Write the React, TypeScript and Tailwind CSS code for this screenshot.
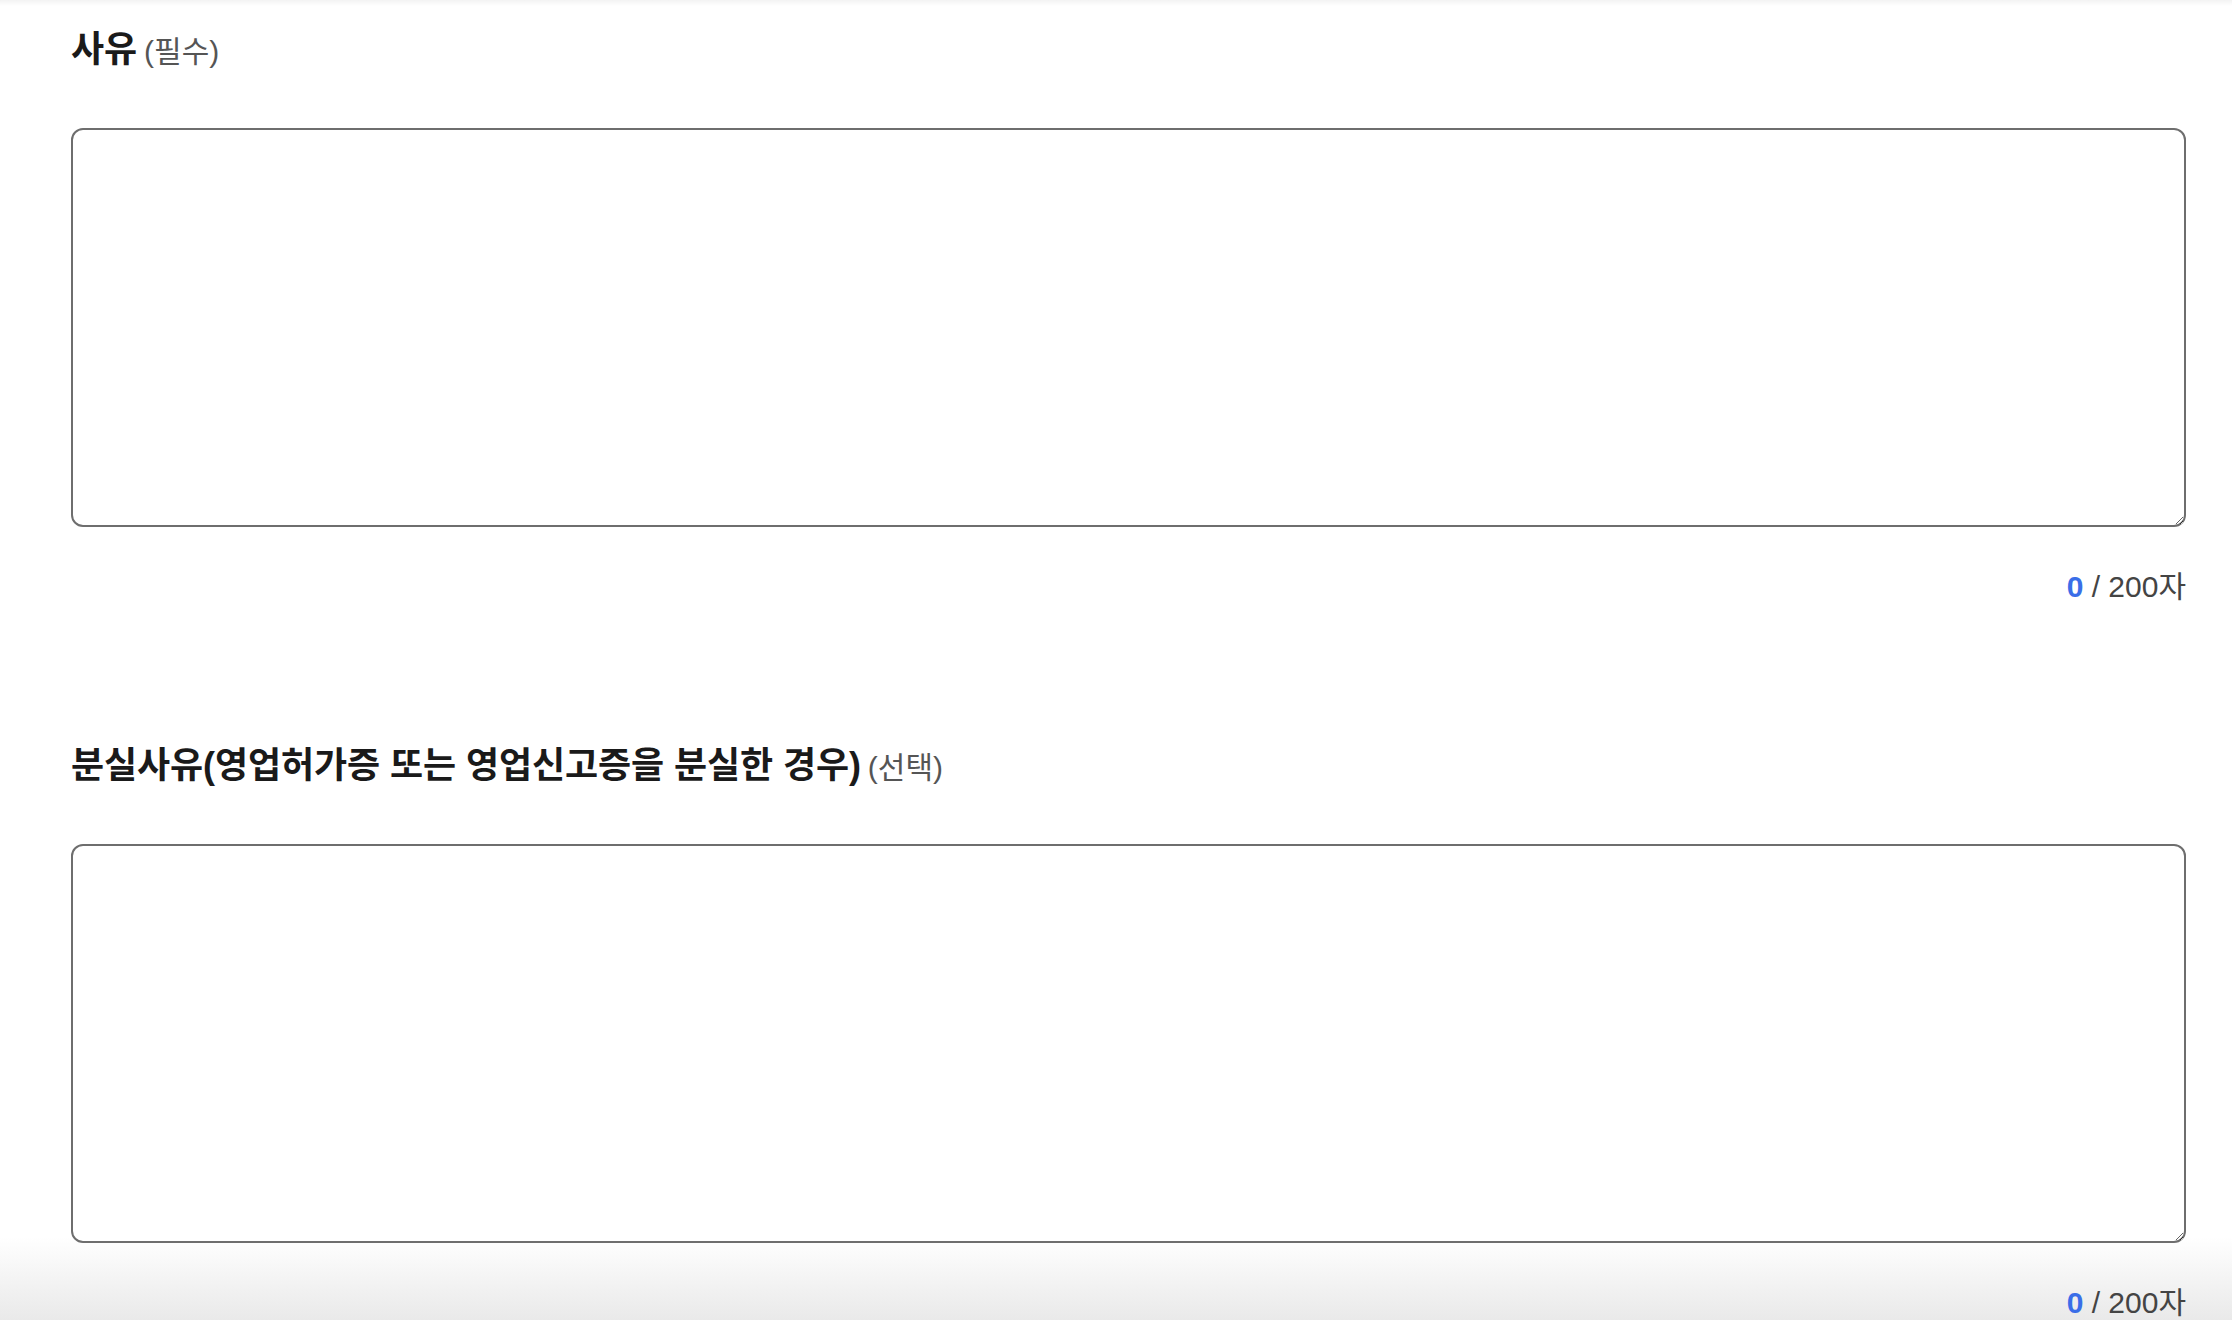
import { useState } from 'react';

const MAX = 200;

function ReasonField({ title, tag }: { title: string; tag: string }) {
  const [value, setValue] = useState('');

  return (
    <div>
      <label className="flex items-baseline gap-[7px] text-[36px] leading-[40px]">
        <span className="font-bold text-[#1a1a1a] tracking-[-0.1px]">{title}</span>
        <span className="text-[30px] text-[#555555]">({tag})</span>
      </label>
      <textarea
        value={value}
        maxLength={MAX}
        onChange={(e) => setValue(e.target.value)}
        className="mt-[56px] block h-[399px] w-full resize border-2 border-[#6e6e6e] rounded-[12px] bg-white p-4 text-[28px] outline-none"
      />
      <p className="mt-[42px] text-right text-[30px] leading-[36px] text-[#444444]">
        <span className="font-bold text-[#3a6ee8]">{value.length}</span> / {MAX}자
      </p>
    </div>
  );
}

export default function App() {
  return (
    <div
      className="relative min-h-[1320px] overflow-hidden bg-white"
      style={{ fontFamily: '"Liberation Sans", "Noto Sans CJK KR", sans-serif' }}
    >
      {/* header shadow */}
      <div className="pointer-events-none absolute left-0 right-0 top-0 h-[6px] bg-gradient-to-b from-[#f3f3f3] to-white" />

      {/* bottom bar shadow, behind the content */}
      <div className="pointer-events-none absolute bottom-0 left-0 right-0 h-[84px] bg-gradient-to-b from-white to-[#e9e9e9]" />

      <div className="relative z-10 pl-[71px] pr-[46px] pt-[30px] flex flex-col gap-[141px]">
        <ReasonField title="사유" tag="필수" />
        <ReasonField title="분실사유(영업허가증 또는 영업신고증을 분실한 경우)" tag="선택" />
      </div>
    </div>
  );
}
